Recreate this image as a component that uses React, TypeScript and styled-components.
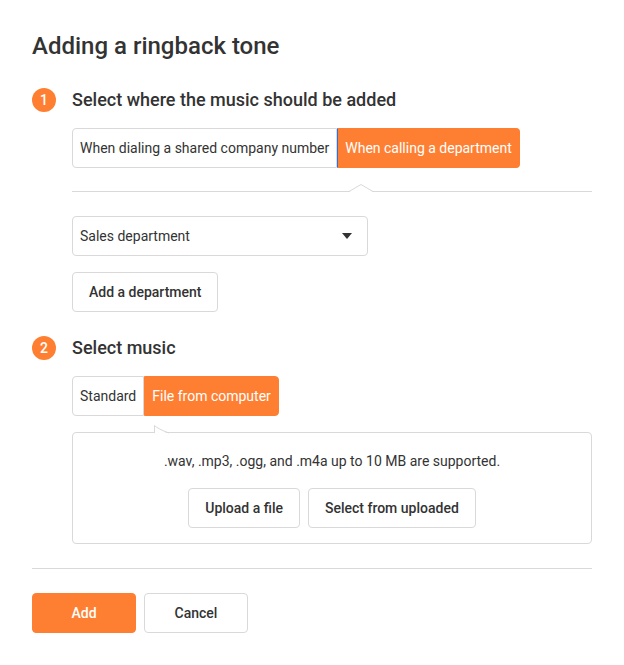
import styled, { createGlobalStyle } from "styled-components";

const ORANGE = "#ff7f32";
const BORDER = "#d9d9d9";

const GlobalStyle = createGlobalStyle`
  body {
    margin: 0;
    background: #fff;
    font-family: Roboto, "Liberation Sans", Arial, sans-serif;
    color: #333;
  }
  * { box-sizing: border-box; }
`;

const Page = styled.div`
  width: 624px;
  padding: 32px;
`;

const Title = styled.h1`
  margin: 0 0 28px;
  font-size: 24px;
  line-height: 28px;
  font-weight: 500;
  color: #333;
`;

const Step = styled.section<{ $gapTop?: number }>`
  margin-top: ${(p) => p.$gapTop ?? 0}px;
`;

const StepHeader = styled.div`
  display: flex;
  align-items: center;
  gap: 16px;
  height: 24px;
  margin-bottom: 16px;
`;

const Badge = styled.span`
  width: 24px;
  height: 24px;
  border-radius: 50%;
  background: ${ORANGE};
  color: #fff;
  font-size: 14px;
  font-weight: 500;
  display: flex;
  align-items: center;
  justify-content: center;
`;

const StepTitle = styled.h2`
  margin: 0;
  font-size: 18px;
  line-height: 24px;
  font-weight: 500;
`;

const StepBody = styled.div`
  padding-left: 40px;
`;

const Segments = styled.div`
  display: inline-flex;
  height: 40px;
`;

const Segment = styled.button<{ $active?: boolean; $focused?: boolean }>`
  height: 40px;
  padding: 0 7px;
  font-family: inherit;
  font-size: 14px;
  color: ${(p) => (p.$active ? "#fff" : "#333")};
  background: ${(p) => (p.$active ? ORANGE : "#fff")};
  border: 1px solid ${(p) => (p.$active ? ORANGE : BORDER)};
  border-left: 1px solid
    ${(p) => (p.$focused ? "#2f6fe4" : p.$active ? ORANGE : BORDER)};
  cursor: pointer;

  &:first-child {
    border-radius: 4px 0 0 4px;
  }
  &:last-child {
    border-radius: 0 4px 4px 0;
  }
  & + & {
    margin-left: ${(p) => (p.$active ? "0" : "-1px")};
  }
`;

const NotchLine = styled.div`
  position: relative;
  margin: 23px 0 24px;
  border-top: 1px solid ${BORDER};
`;

const Notch = styled.svg`
  position: absolute;
  top: -8px;
`;

const Select = styled.div`
  width: 296px;
  height: 40px;
  display: flex;
  align-items: center;
  justify-content: space-between;
  padding: 0 15px 0 7px;
  border: 1px solid ${BORDER};
  border-radius: 4px;
  font-size: 14px;
`;

const Caret = styled.span`
  width: 0;
  height: 0;
  border-left: 5px solid transparent;
  border-right: 5px solid transparent;
  border-top: 6px solid #333;
`;

const Button = styled.button<{ $primary?: boolean; $width?: number }>`
  height: 40px;
  padding: 0 16px;
  ${(p) => (p.$width ? `width: ${p.$width}px;` : "")}
  font-family: inherit;
  font-size: 14px;
  font-weight: 500;
  color: ${(p) => (p.$primary ? "#fff" : "#333")};
  background: ${(p) => (p.$primary ? ORANGE : "#fff")};
  border: 1px solid ${(p) => (p.$primary ? ORANGE : BORDER)};
  border-radius: 4px;
  cursor: pointer;
`;

const ButtonRow = styled.div<{ $center?: boolean; $top?: number }>`
  display: flex;
  gap: 8px;
  justify-content: ${(p) => (p.$center ? "center" : "flex-start")};
  margin-top: ${(p) => p.$top ?? 0}px;
`;

const UploadBox = styled.div`
  position: relative;
  margin-top: 16px;
  padding: 18px 16px 15px;
  border: 1px solid ${BORDER};
  border-radius: 4px;
`;

const Hint = styled.p`
  margin: 0;
  font-size: 14px;
  line-height: 20px;
  text-align: center;
`;

const Footer = styled.div`
  margin-top: 24px;
  padding-top: 24px;
  border-top: 1px solid ${BORDER};
`;

export default function App() {
  return (
    <>
      <GlobalStyle />
      <Page>
        <Title>Adding a ringback tone</Title>

        <Step>
          <StepHeader>
            <Badge>1</Badge>
            <StepTitle>Select where the music should be added</StepTitle>
          </StepHeader>
          <StepBody>
            <Segments>
              <Segment>When dialing a shared company number</Segment>
              <Segment $active $focused>
                When calling a department
              </Segment>
            </Segments>
            <NotchLine>
              <Notch width="24" height="8" viewBox="0 0 24 8" style={{ left: 277 }}>
                <path d="M0 8 L12 1 L24 8 Z" fill="#fff" />
                <polyline points="0,7.5 12,0.5 24,7.5" fill="none" stroke={BORDER} />
              </Notch>
            </NotchLine>
            <Select>
              Sales department
              <Caret />
            </Select>
            <ButtonRow $top={16}>
              <Button>Add a department</Button>
            </ButtonRow>
          </StepBody>
        </Step>

        <Step $gapTop={24}>
          <StepHeader>
            <Badge>2</Badge>
            <StepTitle>Select music</StepTitle>
          </StepHeader>
          <StepBody>
            <Segments>
              <Segment>Standard</Segment>
              <Segment $active>File from computer</Segment>
            </Segments>
            <UploadBox>
              <Notch width="16" height="9" viewBox="0 0 16 9" style={{ left: 81 }}>
                <path d="M0.5 9 L0.5 0.5 Q4 4 15 9 Z" fill="#fff" />
                <path d="M0.5 8 L0.5 0.5 Q4 4 15 8" fill="none" stroke={BORDER} />
              </Notch>
              <Hint>.wav, .mp3, .ogg, and .m4a up to 10 MB are supported.</Hint>
              <ButtonRow $center $top={17}>
                <Button>Upload a file</Button>
                <Button>Select from uploaded</Button>
              </ButtonRow>
            </UploadBox>
          </StepBody>
        </Step>

        <Footer>
          <ButtonRow>
            <Button $primary $width={104}>Add</Button>
            <Button $width={104}>Cancel</Button>
          </ButtonRow>
        </Footer>
      </Page>
    </>
  );
}
